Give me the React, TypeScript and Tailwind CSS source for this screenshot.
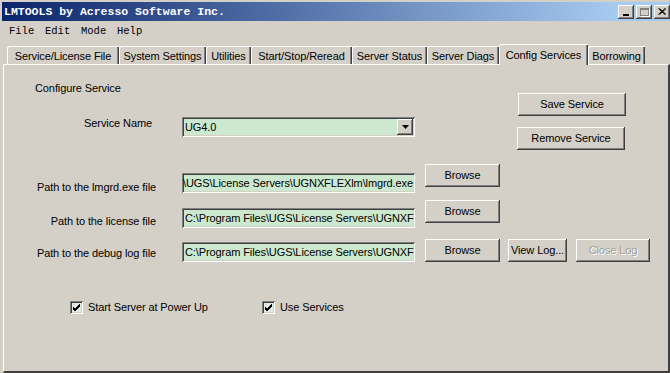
import React from "react";

const raised =
  "bg-[#D4D0C8] shadow-[inset_-1px_-1px_#404040,inset_1px_1px_#ffffff,inset_-2px_-2px_#808080,inset_2px_2px_#D4D0C8]";
const sunken =
  "shadow-[inset_1px_1px_#808080,inset_-1px_-1px_#ffffff,inset_2px_2px_#404040,inset_-2px_-2px_#D4D0C8]";

const tabs = [
  { label: "Service/License File", w: "w-[112px]" },
  { label: "System Settings", w: "w-[87px]" },
  { label: "Utilities", w: "w-[45px]" },
  { label: "Start/Stop/Reread", w: "w-[101px]" },
  { label: "Server Status", w: "w-[75px]" },
  { label: "Server Diags", w: "w-[72px]" },
  { label: "Config Services", w: "w-[89px]", active: true },
  { label: "Borrowing", w: "w-[57px]" },
];

function Button({ label, w, disabled }: { label: string; w: string; disabled?: boolean }) {
  return (
    <div className={`${raised} ${w} h-[23px] flex items-center justify-center shrink-0`}>
      <span className={disabled ? "text-[#a0a0a0] [text-shadow:1px_1px_#ffffff]" : ""}>{label}</span>
    </div>
  );
}

// text box scrolled to show only the visible part of the path
function PathInput({ text, end }: { text: string; end?: boolean }) {
  return (
    <div
      className={`${sunken} w-[233px] h-[20px] bg-[#CCE8CF] flex items-center overflow-hidden whitespace-nowrap shrink-0 ${
        end ? "justify-end pr-[2px]" : "pl-[3px]"
      }`}
    >
      <span>{text}</span>
    </div>
  );
}

function Check({ label }: { label: string }) {
  return (
    <div className="flex items-center">
      <div className={`${sunken} w-[13px] h-[13px] bg-[#E3E9DE] flex items-center justify-center`}>
        <svg width="9" height="9" viewBox="0 0 9 9">
          <path d="M1 4 L3 6 L8 1 M1 5 L3 7 L8 2 M1 6 L3 8 L8 3" stroke="#000" strokeWidth="1" fill="none" />
        </svg>
      </div>
      <span className="ml-[5px]">{label}</span>
    </div>
  );
}

export default function App() {
  return (
    <div className="w-[670px] h-[373px] overflow-hidden bg-[#D4D0C8] pt-[2px] pl-[2px] flex flex-col font-['Liberation_Sans',Arial,sans-serif] text-[11px] tracking-[-0.1px] text-black">
      {/* Title bar */}
      <div className="h-[19px] shrink-0 flex items-center justify-between pl-[2px] bg-[linear-gradient(90deg,#0A246A_0%,#A6CAF0_92%)]">
        <span className="text-white font-bold text-[11.5px] tracking-normal font-['Liberation_Mono','DejaVu_Sans_Mono',monospace]">
          LMTOOLS by Acresso Software Inc.
        </span>
        <div className="flex gap-[2px]">
          <div className={`${raised} w-[16px] h-[14px] flex items-end justify-center pb-[3px]`}>
            <div className="w-[6px] h-[2px] bg-black" />
          </div>
          <div className={`${raised} w-[16px] h-[14px] flex items-center justify-center`}>
            <div className="w-[9px] h-[8px] border border-[#808080] border-t-2 shadow-[1px_1px_#ffffff]" />
          </div>
          <div className={`${raised} w-[16px] h-[14px] flex items-center justify-center`}>
            <svg width="8" height="7" viewBox="0 0 8 7">
              <path d="M0.5 0.5 L7 6.5 M1.5 0.5 L8 6.5 M7 0.5 L0.5 6.5 M8 0.5 L1.5 6.5" stroke="#000" strokeWidth="1" />
            </svg>
          </div>
        </div>
      </div>

      {/* Menu bar */}
      <div className="h-[21px] shrink-0 flex items-center pl-[7px] pt-[1px] font-['Liberation_Mono','DejaVu_Sans_Mono',monospace] text-[10.5px] tracking-normal">
        {["File", "Edit", "Mode", "Help"].map((m) => (
          <span key={m} className="w-[36px]">
            {m}
          </span>
        ))}
      </div>

      {/* Tab strip */}
      <div className="h-[22px] shrink-0 flex items-end pl-[4px] ml-[1px] relative z-10">
        {tabs.map((t) =>
          t.active ? (
            <div
              key={t.label}
              className={`${t.w} h-[21px] -mb-[1px] bg-[#D4D0C8] rounded-tl-[2px] shadow-[inset_1px_1px_#ffffff,inset_-1px_0_#404040,inset_-2px_0_#808080] flex items-start justify-center pt-[3px]`}
            >
              {t.label}
            </div>
          ) : (
            <div
              key={t.label}
              className={`${t.w} h-[18px] rounded-tl-[2px] shadow-[inset_1px_1px_#ffffff,inset_-1px_0_#404040,inset_-2px_0_#808080] flex items-start justify-center pt-[2px]`}
            >
              {t.label}
            </div>
          )
        )}
      </div>

      {/* Panel */}
      <div className="ml-[1px] flex-1 border-t border-l border-white border-r-2 border-r-[#404040] border-b-2 border-b-[#404040] flex flex-col">
        {/* Top section */}
        <div className="flex">
          <div className="w-[411px] flex flex-col">
            <div className="ml-[31px] mt-[16px] h-[14px] leading-[14px]">Configure Service</div>
            <div className="mt-[21px] flex items-start">
              <div className="w-[148px] text-right leading-[14px]">Service Name</div>
              <div className={`${sunken} ml-[30px] mt-[1px] w-[233px] h-[20px] bg-[#CCE8CF] flex items-center justify-between pl-[3px] pr-[2px]`}>
                <span>UG4.0</span>
                <div className={`${raised} w-[16px] h-[16px] flex items-center justify-center`}>
                  <svg width="7" height="4" viewBox="0 0 7 4">
                    <path d="M0 0 H7 L3.5 4 Z" fill="#000" />
                  </svg>
                </div>
              </div>
            </div>
          </div>
          <div className="ml-[103px] flex flex-col">
            <div className="mt-[28px]">
              <Button label="Save Service" w="w-[108px]" />
            </div>
            <div className="mt-[11px] -ml-[1px]">
              <Button label="Remove Service" w="w-[108px]" />
            </div>
          </div>
        </div>

        {/* lmgrd row */}
        <div className="mt-[14px] flex items-start">
          <div className="w-[152px] mt-[16px] text-right leading-[14px]">Path to the lmgrd.exe file</div>
          <div className="ml-[26px] mt-[9px]">
            <PathInput text="\UGS\License Servers\UGNXFLEXlm\lmgrd.exe" end />
          </div>
          <div className="ml-[10px]">
            <Button label="Browse" w="w-[75px]" />
          </div>
        </div>

        {/* license row */}
        <div className="mt-[6px] flex items-start">
          <div className="w-[152px] mt-[14px] text-right leading-[14px]">Path to the license file</div>
          <div className="ml-[26px] mt-[8px]">
            <PathInput text="C:\Program Files\UGS\License Servers\UGNXF" />
          </div>
          <div className="ml-[10px]">
            <Button label="Browse" w="w-[75px]" />
          </div>
        </div>

        {/* debug log row */}
        <div className="mt-[11px] flex items-start">
          <div className="w-[152px] mt-[7px] text-right leading-[14px]">Path to the debug log file</div>
          <div className="ml-[26px] mt-[3px]">
            <PathInput text="C:\Program Files\UGS\License Servers\UGNXF" />
          </div>
          <div className="ml-[10px]">
            <Button label="Browse" w="w-[75px]" />
          </div>
          <div className="ml-[8px]">
            <Button label="View Log..." w="w-[59px]" />
          </div>
          <div className="ml-[9px]">
            <Button label="Close Log" w="w-[74px]" disabled />
          </div>
        </div>

        {/* checkboxes */}
        <div className="mt-[37px] ml-[66px] flex items-center">
          <div className="w-[192px]">
            <Check label="Start Server at Power Up" />
          </div>
          <Check label="Use Services" />
        </div>
      </div>
    </div>
  );
}
